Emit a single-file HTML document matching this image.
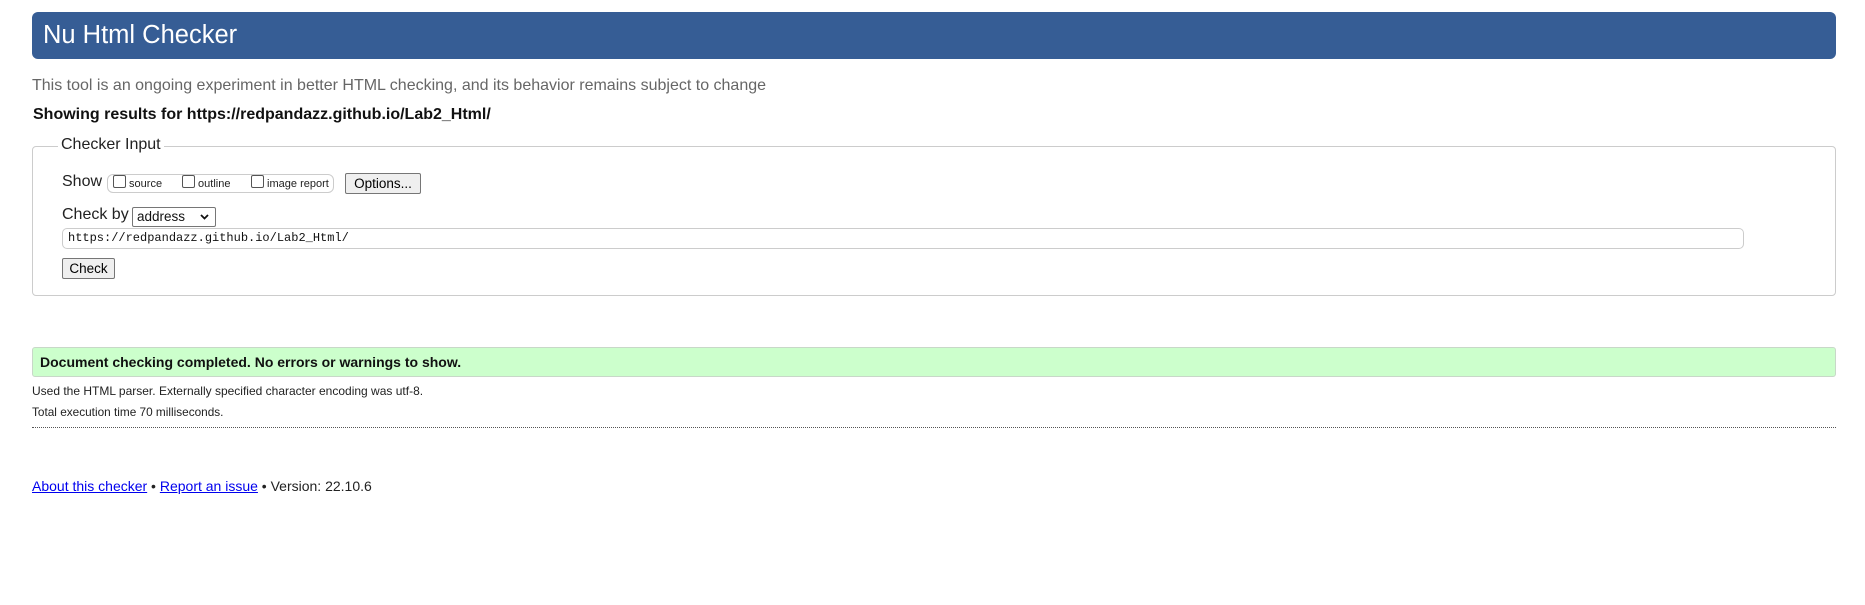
<!DOCTYPE html>
<html><head><meta charset="utf-8"><style>
body{margin:0;background:#fff;font-family:"Liberation Sans",Arial,sans-serif;width:1865px;height:605px;position:relative;overflow:hidden}
.a{position:absolute;white-space:nowrap}
#hd{left:32px;top:12px;width:1804px;height:47px;background:#365d95;border-radius:6px}
#hd span{position:absolute;left:11px;top:9px;color:#fff;font-size:25.5px}
fieldset{position:absolute;left:32px;top:146px;width:1804px;height:150px;border:1px solid #ccc;border-radius:4px;margin:0;padding:0;box-sizing:border-box}
.cb{display:inline-block;width:11px;height:11px;border:1px solid #555;border-radius:2px;background:#fff;vertical-align:-1px}
.btn{position:absolute;border:1px solid #767676;background:#efefef;border-radius:2px;box-sizing:border-box;font-size:13.5px;text-align:center}
a{color:#00e;text-decoration:underline}
</style></head><body>
<div id="hd" class="a"><span>Nu Html Checker</span></div>
<div class="a" style="left:32px;top:77px;font-size:16px;color:#666">This tool is an ongoing experiment in better HTML checking, and its behavior remains subject to change</div>
<div class="a" style="left:33px;top:106px;font-size:16px;font-weight:bold;color:#111">Showing results for https://redpandazz.github.io/Lab2_Html/</div>
<fieldset></fieldset>
<div class="a" style="left:58px;top:136px;padding:0 3px;background:#fff;font-size:16px;color:#222">Checker Input</div>
<div class="a" style="left:62px;top:173px;font-size:16px;color:#222">Show</div>
<div class="a" style="left:107px;top:174px;width:227px;height:19px;border:1px solid #ccc;border-radius:6px;box-sizing:border-box;font-size:11px;color:#222;line-height:17px">
<span style="position:absolute;left:5px"><span class="cb"></span> source</span>
<span style="position:absolute;left:74px"><span class="cb"></span> outline</span>
<span style="position:absolute;left:143px"><span class="cb"></span> image report</span></div>
<div class="btn" style="left:345px;top:173px;width:76px;height:21px;line-height:19px">Options...</div>
<div class="a" style="left:62px;top:206px;font-size:16px;color:#222">Check by</div>
<div class="a" style="left:132px;top:207px;width:84px;height:20px;border:1px solid #767676;border-radius:2px;box-sizing:border-box;font-size:13.5px;line-height:18px;padding-left:4px;color:#111">address<svg style="position:absolute;right:6px;top:6px" width="9" height="6" viewBox="0 0 9 6"><path d="M1 1l3.5 3.5L8 1" fill="none" stroke="#111" stroke-width="1.8"/></svg></div>
<div class="a" style="left:62px;top:228px;width:1682px;height:21px;border:1px solid #ccc;border-radius:5px;box-sizing:border-box;font-family:'Liberation Mono',monospace;font-size:12px;line-height:19px;padding-left:5px;color:#111">https://redpandazz.github.io/Lab2_Html/</div>
<div class="btn" style="left:62px;top:258px;width:53px;height:21px;line-height:19px">Check</div>
<div class="a" style="left:32px;top:347px;width:1804px;height:30px;background:#ccffcc;border:1px solid #c8d8c8;border-radius:3px;box-sizing:border-box"></div>
<div class="a" style="left:40px;top:354px;font-size:14px;font-weight:bold;color:#111">Document checking completed. No errors or warnings to show.</div>
<div class="a" style="left:32px;top:384px;font-size:12px;color:#222">Used the HTML parser. Externally specified character encoding was utf-8.</div>
<div class="a" style="left:32px;top:405px;font-size:11.8px;color:#222">Total execution time 70 milliseconds.</div>
<div class="a" style="left:32px;top:427px;width:1804px;border-top:1px dotted #555"></div>
<div class="a" style="left:32px;top:478px;font-size:14px;color:#222"><a>About this checker</a> • <a>Report an issue</a> • Version: 22.10.6</div>
</body></html>
